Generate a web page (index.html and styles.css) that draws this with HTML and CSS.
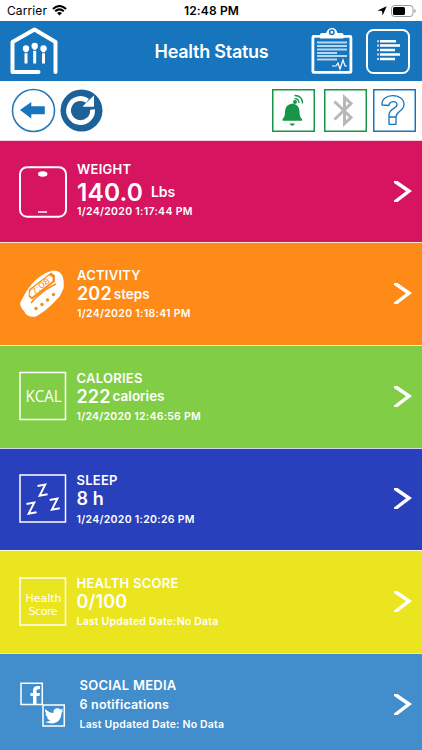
FILE: index.html
```html
<!DOCTYPE html>
<html lang="en">
<head>
<meta charset="utf-8">
<title>Health Status</title>
<link rel="stylesheet" href="styles.css">
</head>
<body>
<div class="status">
  <div class="carrier"><span>Carrier</span>
    <svg width="15" height="11" viewBox="0 0 15 11"><path d="M.9 4Q7.5-2 14.1 4M3.2 6.3Q7.5 2.4 11.8 6.3" fill="none" stroke="#000" stroke-width="2"/><path d="M5 8Q7.5 5.9 10 8L7.5 10.6Z"/></svg>
  </div>
  <div class="clock">12:48 PM</div>
  <div class="power">
    <svg width="10" height="10" viewBox="0 0 10 10"><path d="M9.7.3L5.6 9.6 5 5 .4 4.4Z"/></svg>
    <svg width="25" height="12" viewBox="0 0 25 12"><rect x=".5" y=".5" width="21.5" height="11" rx="3" fill="none" stroke="#999"/><rect x="2" y="2" width="12" height="8" rx="1.5"/><path d="M23.3 4v4q1.4-.6 1.4-2t-1.4-2" fill="#999"/></svg>
  </div>
</div>
<header class="header">
  <svg class="logo" width="48" height="48" viewBox="0 0 48 48" fill="none" stroke="#fff" stroke-width="4" stroke-linecap="round" stroke-linejoin="round"><path d="M28.500 45H2.500V15L24.500 2.500 45.500 15V45"/><path d="M16 24v12.500M24.700 22v14.500M33.500 24v12.500" stroke-width="3" stroke-linecap="butt"/><g fill="#fff" stroke="none"><circle cx="16" cy="21.500" r="3.200"/><circle cx="24.700" cy="19" r="3.200"/><circle cx="33.500" cy="21.500" r="3.200"/></g><path d="M13.500 25.800h5M22.200 23.300h5M31 25.800h5" stroke="#1675bd" stroke-width="1" stroke-linecap="butt"/></svg>
  <h1>Health Status</h1>
  <svg class="clipboard" width="42" height="46" viewBox="0 0 42 46"><rect x="1.900" y="8.400" width="38" height="36" rx="1" fill="none" stroke="#fff" stroke-width="2.800"/><path d="M9 10.500V6.500Q9 5 11 5h4Q17 0 21 0t5.500 5h4q2 0 2 1.500v4Z" fill="#fff"/><circle cx="20.800" cy="4.300" r="2.200" fill="none" stroke="#1675bd" stroke-width="1.500"/><path d="M6 14.500H36M6 18H36M6 21.500H36M6 25H26M6 28H36M6 31.500H26" stroke="#b7d8f0" stroke-width="2"/><path d="M21 38h4l2-3 2 6 3-9 2 6h2" fill="none" stroke="#fff" stroke-width="1.200"/></svg>
  <svg class="menu" width="44" height="45" viewBox="0 0 44 45" fill="none" stroke="#fff"><rect x="1" y="1" width="42" height="43" rx="6.500" stroke-width="2"/><path d="M14 12.300H30M14 16.500H34M14 21H29M14 25.500H34M14 30H29" stroke-width="2.400"/><path d="M11.300 12.300h1.500m-1.500 4.200h1.500m-1.500 4.500h1.500m-1.500 4.500h1.500m-1.500 4.500h1.500" stroke-width="2"/></svg>
</header>
<nav class="tools">
  <svg class="back" width="45" height="45" viewBox="0 0 45 45"><circle cx="22.500" cy="22.500" r="21" fill="#fff" stroke="#2679b8" stroke-width="1.600"/><path d="M9 22L20.300 14v4.200H33.800v8H20.300V30.500Z" fill="#1675bd"/></svg>
  <svg class="reload" width="43" height="43" viewBox="0 0 43 43"><circle cx="21.500" cy="21.500" r="21" fill="#1c6299"/><path d="M32.500 20.500A12 12 0 1 1 27.500 11.800" fill="none" stroke="#fff" stroke-width="4.800"/><path d="M34 6.500V17.700H22.500L26.500 13.500Z" fill="#fff"/></svg>
  <svg class="bell" width="43" height="43" viewBox="0 0 43 43"><rect x=".75" y=".75" width="41.500" height="41.500" fill="#fff" stroke="#169447" stroke-width="1.500"/><path d="M20.500 14.500q7 1 7 8c0 4 .7 6 2.500 7.500v1.800H10.500V30c1.800-1.500 2.500-3.500 2.500-7.500q0-7 7.500-8M17.500 34.500h5.500l-1.500 2h-2.500Z" fill="#169447"/><circle cx="23" cy="13" r="2" fill="#169447"/><path d="M22.500 9.700q4.500 0 4.500 4.500M22.500 6.500q8 0 8 8" fill="none" stroke="#169447" stroke-width="1.300"/></svg>
  <svg class="bluetooth" width="43" height="43" viewBox="0 0 43 43"><rect x=".75" y=".75" width="41.500" height="41.500" fill="#fff" stroke="#169447" stroke-width="1.500"/><path d="M10.500 12.500L27 28.500 20.500 34.500V8.500L27 14.500 10.500 30.500" fill="none" stroke="#b8b8b8" stroke-width="3"/></svg>
  <svg class="help" width="43" height="43" viewBox="0 0 43 43"><rect x=".75" y=".75" width="41.500" height="41.500" fill="#fff" stroke="#1675bd" stroke-width="1.500"/><path d="M9 16C8 3.500 31 3.500 31 15.500c0 7-8 6.500-8 12.500v7.300h-7V26c0-6.500 8-6 8-10.500 0-4-7.500-4-8 1ZM16 28h7" fill="none" stroke="#1675bd" stroke-width="1.300" stroke-linejoin="round"/></svg>
</nav>
<main>
  <section class="card weight">
    <svg class="icon" width="50" height="52" viewBox="0 0 50 52"><rect x="2" y="1.200" width="46" height="49.500" rx="7" fill="none" stroke="#fff" stroke-width="2"/><ellipse cx="24.700" cy="8" rx="4.700" ry="2.700" fill="#fff"/><path d="M20 46h9" stroke="#fff" stroke-width="1.500"/></svg>
    <div class="info"><h2>WEIGHT</h2><p class="value big"><b>140.0</b><span>Lbs</span></p><p class="date">1/24/2020 1:17:44 PM</p></div>
    <svg class="chevron" width="20" height="22" viewBox="0 0 20 22"><path d="M1 0H4.500L19 10 4.500 21H1V19.500L13 10.300 1 2Z"/></svg>
  </section>
  <section class="card activity">
    <svg class="icon" width="50" height="52" viewBox="0 0 50 52"><path d="M35 2.500Q45 2.500 45.700 14V20L42 28C33 38 26 44 18 48.500Q9 50 6 43Q1 38 2.500 34L8 24C15 13 24 5 35 2.500Z" fill="#fff"/><path d="M11 21.500L33 4.500 37 7.500V13.500L14 31.500 10.500 28.500Z" fill="#fe8a17"/><path d="M38 16Q24 22 13 35" fill="none" stroke="#fe8a17" stroke-width="1.500"/><path d="M12.500 22L31 7.500 34.500 9V13L14 29 11.500 27Z" fill="#fff"/><g fill="#fe8a17"><circle cx="18" cy="40.500" r="1.700"/><circle cx="24" cy="36.500" r="1.700"/><circle cx="29.500" cy="32" r="1.700"/><circle cx="35.500" cy="26.500" r="1.700"/></g><text class="watch" transform="translate(16 27) rotate(-39)" textLength="21" lengthAdjust="spacingAndGlyphs">7:08</text></svg>
    <div class="info"><h2>ACTIVITY</h2><p class="value"><b>202</b><span>steps</span></p><p class="date">1/24/2020 1:18:41 PM</p></div>
    <svg class="chevron" width="20" height="22" viewBox="0 0 20 22"><path d="M1 0H4.500L19 10 4.500 21H1V19.500L13 10.300 1 2Z"/></svg>
  </section>
  <section class="card calories">
    <svg class="icon" width="50" height="52" viewBox="0 0 50 52"><rect class="frame" x="2" y="1.500" width="45.500" height="47"/><text class="kcal" x="7.500" y="30.500" textLength="36" lengthAdjust="spacingAndGlyphs">KCAL</text></svg>
    <div class="info"><h2>CALORIES</h2><p class="value"><b>222</b><span>calories</span></p><p class="date long">1/24/2020 12:46:56 PM</p></div>
    <svg class="chevron" width="20" height="22" viewBox="0 0 20 22"><path d="M1 0H4.500L19 10 4.500 21H1V19.500L13 10.300 1 2Z"/></svg>
  </section>
  <section class="card sleep">
    <svg class="icon" width="50" height="52" viewBox="0 0 50 52"><rect class="frame" x="2" y="2" width="45.500" height="47"/><path d="M19.500 13l7.800-1.500-5.700 11.300 8-1.500M8.500 31l7.800-1.500-5.700 11.300 8-1.500M31.700 27l7.800-1.500-5.700 11.300 8-1.500" fill="none" stroke="#fff" stroke-width="1.900"/></svg>
    <div class="info"><h2>SLEEP</h2><p class="value hours"><b>8 h</b></p><p class="date">1/24/2020 1:20:26 PM</p></div>
    <svg class="chevron" width="20" height="22" viewBox="0 0 20 22"><path d="M1 0H4.500L19 10 4.500 21H1V19.500L13 10.300 1 2Z"/></svg>
  </section>
  <section class="card score">
    <svg class="icon" width="50" height="52" viewBox="0 0 50 52"><rect class="frame" x="2" y="2" width="45.500" height="47"/><text class="hs" x="7.500" y="26" textLength="36">Health</text><text class="hs" x="10.500" y="38.500" textLength="29">Score</text></svg>
    <div class="info"><h2>HEALTH SCORE</h2><p class="value"><b>0/100</b></p><p class="date nodata">Last Updated Date:No Data</p></div>
    <svg class="chevron" width="20" height="22" viewBox="0 0 20 22"><path d="M1 0H4.500L19 10 4.500 21H1V19.500L13 10.300 1 2Z"/></svg>
  </section>
  <section class="card social">
    <svg class="icon" width="50" height="52" viewBox="0 0 50 52"><g transform="translate(0 -1.500)"><path d="M3 5.700H24.300V27H3ZM25 27.500H46.300V48.500H25Z" fill="none" stroke="#fff" stroke-width="1.500"/><path d="M15 26.500V18.500h-2.500v-3H15V13q0-4.500 4.500-4.500H22v3.300h-2q-1.500 0-1.500 1.500v2.200H22l-.5 3h-3v8Z" fill="#fff"/><path d="M27.500 31.500q3.500 4 8 4c-.5-5 4.500-6 7-3.500l2.500-1-1.500 2.500 2-.5-2 2.300C43.500 43.500 37 48.500 27 44.500q3.500 0 5.500-1.700-3-.3-3.700-2.700h1.700q-3-1.200-3-4l1.700.4q-3-2-1.700-5Z" fill="#fff"/></g></svg>
    <div class="info"><h2>SOCIAL MEDIA</h2><p class="value"><span>6 notifications</span></p><p class="date nodata">Last Updated Date: No Data</p></div>
    <svg class="chevron" width="20" height="22" viewBox="0 0 20 22"><path d="M1 0H4.500L19 10 4.500 21H1V19.500L13 10.300 1 2Z"/></svg>
  </section>
</main>
</body>
</html>
```
FILE: styles.css
```css
* { box-sizing: border-box; margin: 0; padding: 0; }
html, body { height: 750px; overflow: hidden; }
body { width: 422px; background: #fff; color: #000; font-family: Inter, "Liberation Sans", sans-serif; }
svg { display: block; flex: none; }
.status { height: 21px; display: grid; grid-template-columns: 1fr auto 1fr; align-items: center; padding: 0 6px 0 7px; font-size: 12px; }
.carrier, .power { display: flex; align-items: center; gap: 5px; }
.carrier { letter-spacing: .1px; }
.power { justify-content: flex-end; gap: 4px; }
.clock { font-weight: 600; letter-spacing: .15px; }
.header { height: 60px; background: #1675bd; display: flex; align-items: center; padding: 0 12px 0 10px; }
.header h1 { flex: 1; color: #fff; font-size: 18px; font-weight: 600; text-align: left; margin-left: 96.5px; white-space: nowrap; letter-spacing: -.25px; }
.logo { margin-top: -1px; }
.clipboard { margin: -1px 13px 0 0; }
.tools { height: 58.8px; display: flex; align-items: center; padding: 1px 6px 0 11px; }
.reload { margin-left: 4px; }
.bell { margin-left: auto; }
.bluetooth { margin: 0 6px 0 9px; }
.card { height: 102.6px; border-top: 1px solid #ffffffcc; display: flex; align-items: center; padding: 0 9px 0 18px; color: #fff; }
.weight { background: #d61460; }
.activity { background: #fe8a17; }
.calories { background: #81ce46; }
.sleep { background: #2840bb; }
.score { background: #ebe51f; }
.social { background: #428dcb; }
.info { flex: 1; margin-left: 9px; padding-top: 2px; white-space: nowrap; }
.weight .info { padding-top: 0; margin-top: -2.5px; }
.calories .info, .sleep .info, .score .info { margin-left: 8.5px; }
.social .info { margin-left: 11.5px; }
h2 { font-size: 13px; line-height: 16px; font-weight: 600; letter-spacing: .25px; }
.weight h2 { line-height: 17px; }
.value { display: flex; align-items: center; height: 21.5px; font-size: 13.5px; font-weight: 600; gap: 2px; }
.value b { font-size: 18px; font-weight: 600; letter-spacing: .15px; }
.value.big { height: 27px; gap: 8px; }
.value.big b { font-size: 24.5px; letter-spacing: .1px; }
.value.big span { font-size: 14px; }
.date { font-size: 10.5px; line-height: 19px; font-weight: 600; letter-spacing: .3px; }
.date.long { letter-spacing: .25px; }
.date.nodata { letter-spacing: .19px; }
.weight .date { line-height: 14px; }
.social .value { font-size: 12.5px; letter-spacing: .2px; }
.chevron { fill: #fff; }
.frame { fill: none; stroke: #fff; stroke-width: 1.5; }
.kcal { font: 17px "Open Sans", sans-serif; fill: #fff; }
.hs { font: 11px "DejaVu Sans", sans-serif; fill: #fff; }
.watch { font: 8px "Liberation Sans", sans-serif; fill: #fe8a17; }
```
